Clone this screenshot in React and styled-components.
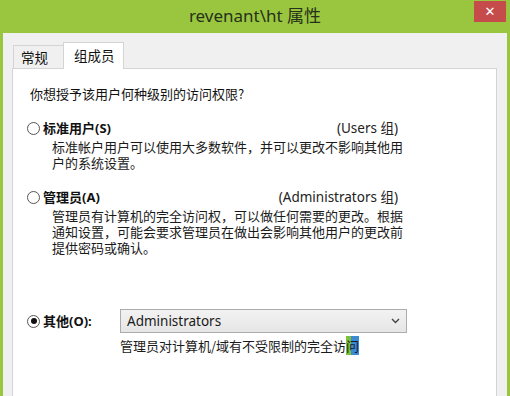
import styled, { createGlobalStyle } from 'styled-components';

const Global = createGlobalStyle`
  html, body { margin: 0; padding: 0; overflow: hidden; }
  body { font-family: "Noto Sans", "Noto Sans CJK SC", sans-serif; }
`;

const Window = styled.div`
  width: 510px;
  height: 396px;
  background: #9ac63f;
  display: flex;
  flex-direction: column;
`;

const TitleBar = styled.div`
  height: 33px;
  display: grid;
  grid-template-columns: 1fr auto 1fr;
  align-items: start;
`;

const Title = styled.div`
  grid-column: 2;
  padding-top: 5px;
  font-size: 17px;
  line-height: 22px;
  color: #26301a;
  white-space: nowrap;
`;

const CloseButton = styled.div`
  grid-column: 3;
  justify-self: end;
  margin: 1px 4px 0 0;
  width: 32px;
  height: 21px;
  background: #c64b4b;
  color: #fff;
  font-size: 13px;
  font-weight: bold;
  line-height: 21px;
  text-align: center;
  font-family: "DejaVu Sans", sans-serif;
`;

const Body = styled.div`
  flex: 1;
  margin: 0 3px;
  background: #f0f0f0;
  padding: 9px 10px 0 9px;
  display: flex;
  flex-direction: column;
  min-height: 0;
`;

const TabRow = styled.div`
  display: flex;
  align-items: flex-end;
  padding-left: 1px;
  position: relative;
  z-index: 1;
  margin-bottom: -1px;
`;

const Tab = styled.div`
  font-family: "Noto Sans CJK SC", sans-serif;
  font-size: 13.5px;
  color: #111;
  border: 1px solid #d4d4d4;
  border-bottom: ${p => (p.$active ? 'none' : '1px solid #d4d4d4')};
  background: ${p => (p.$active ? '#fff' : '#f0f0f0')};
  height: ${p => (p.$active ? '26px' : '22px')};
  line-height: ${p => (p.$active ? '25px' : '22px')};
  padding: ${p => (p.$active ? '0 8px 0 10px' : '0 15px 0 7px')};
  margin-left: ${p => (p.$active ? '-1px' : '0')};
`;

const Panel = styled.div`
  flex: 1;
  background: #fff;
  border: 1px solid #d4d4d4;
  border-bottom: none;
  padding: 17px 0 0 14px;
  color: #111;
  font-size: 13px;
  line-height: 16px;
`;

const Question = styled.div`
  font-family: "Noto Sans CJK SC", sans-serif;
  padding-left: 3px;
`;

const Option = styled.div`
  width: 380px;
  margin-top: ${p => p.$gap}px;
`;

const OptionHead = styled.div`
  display: flex;
  align-items: center;
  height: 16px;
`;

const Radio = styled.span`
  width: 11px;
  height: 11px;
  border-radius: 50%;
  border: 1px solid #555;
  background: #fff;
  display: inline-flex;
  align-items: center;
  justify-content: center;
  flex: none;
  &::after {
    content: '';
    width: 6px;
    height: 6px;
    border-radius: 50%;
    background: ${p => (p.$checked ? '#111' : 'transparent')};
  }
`;

const Label = styled.span`
  margin-left: 3px;
  font-weight: bold;
  font-family: "Noto Sans", "Noto Sans CJK SC", sans-serif;
`;

const Group = styled.span`
  margin-left: auto;
  padding-right: 9px;
  color: #222;
  font-size: 13.5px;
`;

const Desc = styled.div`
  font-family: "Noto Sans CJK SC", sans-serif;
  margin: 3px 0 0 25px;
  color: #1a1a1a;
`;

const OtherRow = styled.div`
  display: flex;
  align-items: center;
  margin-top: 53px;
  height: 24px;
`;

const OtherLabel = styled(Label)`
  width: 77px;
  flex: none;
`;

const Select = styled.div`
  width: 273px;
  height: 22px;
  border: 1px solid #acacac;
  background: linear-gradient(#f2f2f2, #e6e6e6);
  display: flex;
  align-items: center;
  justify-content: space-between;
  padding: 0 6px 0 6px;
  font-size: 13.5px;
  color: #1a1a1a;
`;

const Under = styled.div`
  font-family: "Noto Sans CJK SC", sans-serif;
  margin: 5px 0 0 93px;
  color: #1a1a1a;
`;

const Caret = styled.span`
  background: linear-gradient(90deg, #7fc03a 0 40%, #3a8bd6 40% 100%);
  color: #1a1a1a;
`;

export default function App() {
  return (
    <>
      <Global />
      <Window>
        <TitleBar>
          <Title>revenant\ht 属性</Title>
          <CloseButton>✕</CloseButton>
        </TitleBar>
        <Body>
          <TabRow>
            <Tab>常规</Tab>
            <Tab $active>组成员</Tab>
          </TabRow>
          <Panel>
            <Question>你想授予该用户何种级别的访问权限?</Question>

            <Option $gap={18}>
              <OptionHead>
                <Radio />
                <Label>标准用户(S)</Label>
                <Group>(Users 组)</Group>
              </OptionHead>
              <Desc>标准帐户用户可以使用大多数软件，并可以更改不影响其他用户的系统设置。</Desc>
            </Option>

            <Option $gap={18}>
              <OptionHead>
                <Radio />
                <Label>管理员(A)</Label>
                <Group>(Administrators 组)</Group>
              </OptionHead>
              <Desc>管理员有计算机的完全访问权，可以做任何需要的更改。根据通知设置，可能会要求管理员在做出会影响其他用户的更改前提供密码或确认。</Desc>
            </Option>

            <OtherRow>
              <Radio $checked />
              <OtherLabel>其他(O):</OtherLabel>
              <Select>
                <span>Administrators</span>
                <svg width="9" height="6" viewBox="0 0 9 6">
                  <path d="M1 1 L4.5 4.5 L8 1" fill="none" stroke="#444" strokeWidth="1.4" />
                </svg>
              </Select>
            </OtherRow>
            <Under>管理员对计算机/域有不受限制的完全访<Caret>问</Caret></Under>
          </Panel>
        </Body>
      </Window>
    </>
  );
}
